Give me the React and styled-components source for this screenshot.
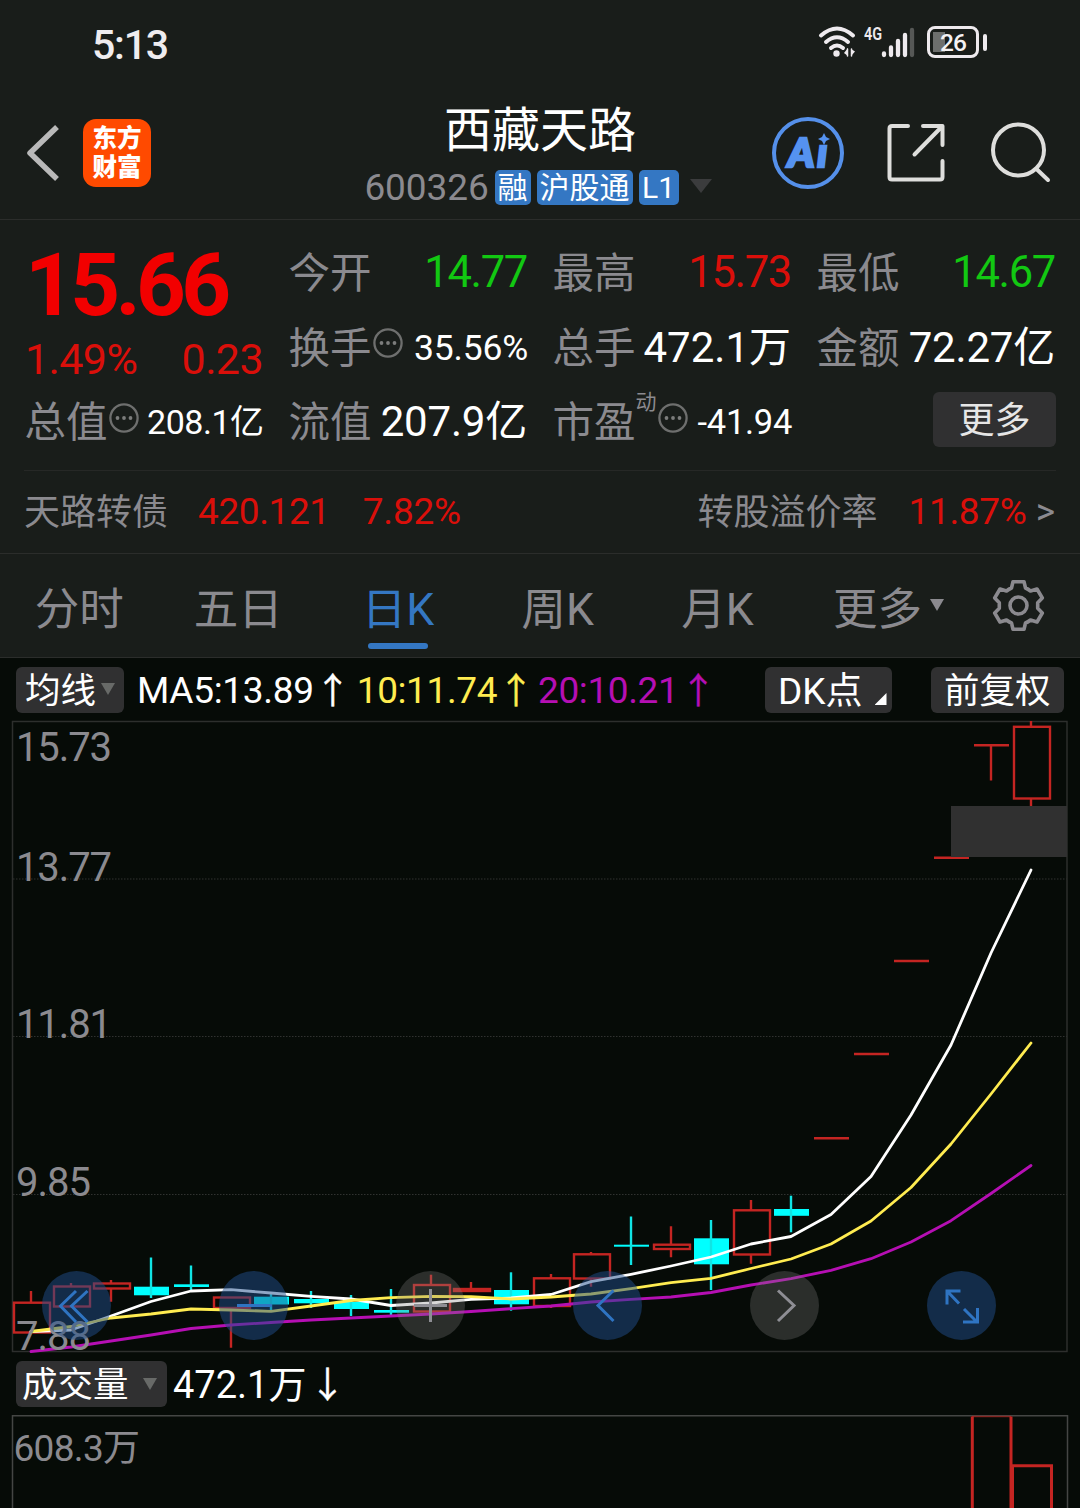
import React from 'react';
import styled, { createGlobalStyle } from 'styled-components';

const c = {
  panel: '#191d1a',
  chart: '#060b07',
  line: '#2b2d2b',
  grey: '#8b8a8f',
  red: '#da0f0a',
  bright: '#f20000',
  green: '#12c812',
  white: '#ffffff',
  blue: '#3477c3',
  yellow: '#ffec50',
  purple: '#b50fb3',
  chip: '#303031',
  candle: '#c42522',
  cyan: '#00ffff',
};

const Global = createGlobalStyle`
  * { box-sizing: border-box; }
  body { margin: 0; background: ${c.chart}; }
  svg { display: block; flex: none; overflow: visible; }
`;

const Screen = styled.main`
  width: 1080px;
  height: 1508px;
  overflow: hidden;
  display: flex;
  flex-direction: column;
  background: ${c.chart};
  font-family: Roboto, 'Noto Sans CJK SC', sans-serif;
  white-space: nowrap;
`;

const Text = styled.span`
  font-size: ${(p) => p.$size}px;
  font-weight: ${(p) => p.$weight || 400};
  letter-spacing: ${(p) => p.$ls || 0}px;
  color: ${(p) => p.$color || c.grey};
  margin-left: ${(p) => p.$ml || 0}px;
  margin-right: ${(p) => p.$mr || 0}px;
`;

/* ---------- status bar ---------- */

const StatusBar = styled.div`
  height: 88px;
  background: ${c.panel};
  display: flex;
  justify-content: space-between;
  align-items: center;
  padding: 2px 93px 0 92px;
  line-height: 60px;
`;

const StatusIcons = styled.div`
  display: flex;
  align-items: center;
  height: 34px;
  margin-top: -6px;
`;

const Network = styled.span`
  width: 20px;
  margin: 0 -1px 16px 7px;
  font-size: 19px;
  font-weight: 600;
  line-height: 18px;
  color: #eeeaee;
  transform: scaleX(0.76);
  transform-origin: left;
`;

const Battery = styled.div`
  width: 52px;
  height: 32px;
  margin-left: 12px;
  border: 3px solid #eeeaee;
  border-radius: 8px;
  padding: 2px;
  display: grid;
  background: linear-gradient(#6d6f6d, #6d6f6d) 3px 3px / 12px 20px no-repeat;
  color: #f4f2f4;
  font-size: 24.5px;
  font-weight: 500;
  line-height: 24px;
  letter-spacing: -1px;
  text-align: center;
`;

const BatteryTip = styled.div`
  width: 4px;
  height: 17px;
  margin-left: 4px;
  border-radius: 2px;
  background: #eeeaee;
`;

/* ---------- header ---------- */

const Header = styled.header`
  height: 132px;
  background: ${c.panel};
  border-bottom: 1px solid ${c.line};
  display: grid;
  grid-template-columns: 360px 356px 1fr;
`;

const HeaderSide = styled.div`
  display: flex;
  align-items: center;
  padding-left: ${(p) => p.$left}px;
  padding-bottom: 2px;
`;

const Logo = styled.div`
  width: 68px;
  height: 68px;
  margin-left: 22px;
  border-radius: 13px;
  background: #ff4a00;
  color: #fff;
  display: grid;
  place-content: center;
  font: 900 24.5px/29px Roboto, 'Noto Sans CJK SC', sans-serif;
`;

const TitleBlock = styled.div`
  display: flex;
  flex-direction: column;
  align-items: center;
`;

const TitleLine = styled.div`
  height: 82px;
  line-height: 86px;
  padding-left: 4px;
`;

const CodeLine = styled.div`
  height: 36px;
  display: flex;
  align-items: center;
  line-height: 36px;
`;

const Badge = styled.span`
  width: ${(p) => p.$w}px;
  height: 35px;
  margin: -2px 6px 0 0;
  border-radius: 5px;
  background: ${c.blue};
  color: #fff;
  font-size: 30px;
  line-height: 36px;
  text-align: center;
`;

const Triangle = styled.i`
  width: 0;
  height: 0;
  flex: none;
  margin-top: ${(p) => p.$mt || 0}px;
  margin-left: ${(p) => p.$ml || 0}px;
  margin-right: ${(p) => p.$mr || 0}px;
  border-left: ${(p) => p.$w / 2}px solid transparent;
  border-right: ${(p) => p.$w / 2}px solid transparent;
  border-top: ${(p) => p.$h}px solid ${(p) => p.$color};
`;

const AiBadge = styled.div`
  width: 72px;
  height: 72px;
  border: 4.5px solid #5590ea;
  border-radius: 50%;
  position: relative;
  color: #5592f0;
  font: italic 900 40px/62px Lato, sans-serif;
  -webkit-text-stroke: 2.6px #5592f0;
  letter-spacing: 3px;
  padding-left: 12px;
`;

const Spark = styled.svg`
  position: absolute;
  left: 42px;
  top: 12px;
`;

/* ---------- quote ---------- */

const Quote = styled.section`
  height: 250px;
  background: ${c.panel};
  padding: 15px 24px 0 25px;
  display: grid;
  grid-template-columns: repeat(4, 238px);
  grid-template-rows: repeat(3, 74.5px);
  column-gap: 26px;
`;

const PriceCell = styled.div`
  grid-row: span 2;
`;

const Price = styled.div`
  height: 100px;
  line-height: 101px;
  margin-left: 0;
`;

const Pair = styled.div`
  height: ${(p) => p.$h || 74.5}px;
  line-height: ${(p) => p.$h || 74.5}px;
  padding-top: ${(p) => (p.$h ? 0 : 2)}px;
  display: flex;
  justify-content: space-between;
  align-items: center;
`;

const Label = styled.span`
  display: flex;
  align-items: center;
  padding-top: 2px;
  margin-left: -0.5px;
  color: ${c.grey};
  font-size: 41.5px;
`;

const Sup = styled.sup`
  font-size: 21px;
  line-height: 22px;
  margin: -42px 0 0 0;
`;

const MoreButton = styled.button`
  justify-self: end;
  align-self: center;
  width: 123px;
  height: 55px;
  margin: -4px -1px 0 0;
  padding: 4px 0 0;
  border: 0;
  border-radius: 6px;
  background: ${c.chip};
  color: #e6e6e6;
  font: 36px/51px Roboto, 'Noto Sans CJK SC', sans-serif;
`;

const Bond = styled.section`
  height: 84px;
  background: ${c.panel};
  border-bottom: 1px solid ${c.line};
  padding: 0 24px;
`;

const BondRow = styled.div`
  height: 83px;
  border-top: 1px solid #262826;
  padding-right: 1px;
  display: flex;
  align-items: center;
  line-height: 82px;
`;

const BondName = styled(Text)`
  padding-top: 2px;
`;

const Spacer = styled.span`
  flex: 1;
`;

/* ---------- tabs ---------- */

const Tabs = styled.nav`
  height: 104px;
  background: ${c.panel};
  border-bottom: 1px solid ${c.line};
  display: grid;
  grid-template-columns: 158.5px repeat(5, 159.7px) 1fr;
`;

const Tab = styled.div`
  display: flex;
  flex-direction: column;
  align-items: center;
  color: ${(p) => (p.$active ? c.blue : c.grey)};
  font-size: 44.5px;
  line-height: 112px;
  &::after {
    content: '';
    width: 60px;
    height: 6px;
    margin-top: -23px;
    border-radius: 3px;
    background: ${(p) => (p.$active ? c.blue : 'transparent')};
  }
`;

const TabLabel = styled.span`
  display: flex;
  align-items: center;
`;

const Settings = styled.div`
  display: flex;
  align-items: center;
  padding-left: 35px;
`;

/* ---------- charts ---------- */

const Toolbar = styled.div`
  height: 63px;
  padding: 0 16px;
  display: flex;
  align-items: center;
  line-height: 46px;
`;

const Reading = styled(Text)`
  padding-top: 2px;
`;

const Chip = styled.div`
  width: ${(p) => p.$w}px;
  height: 46px;
  padding: 3px 0 0 ${(p) => p.$pl}px;
  margin-left: ${(p) => p.$ml || 0}px;
  border-radius: 6px;
  background: ${c.chip};
  color: #fff;
  display: flex;
  align-items: center;
  font-size: ${(p) => p.$size || 35.5}px;
  line-height: 43px;
`;

const Arrow = styled.span`
  width: ${(p) => p.$w}px;
  margin-top: -4px;
  font: 400 36px/46px 'Noto Sans CJK SC', sans-serif;
  -webkit-text-stroke: 0.4px ${(p) => p.$color};
  color: ${(p) => p.$color};
  display: flex;
  justify-content: center;
`;

const Corner = styled.i`
  width: 12px;
  height: 12px;
  margin: 16px 0 0 12px;
  background: #fff;
  clip-path: polygon(100% 0, 100% 100%, 0 100%);
`;

const ChartArea = styled.div`
  position: relative;
  height: ${(p) => p.$h}px;
  flex: none;
`;

const Round = styled.button`
  position: absolute;
  left: ${(p) => p.$x - 34.5}px;
  top: 550px;
  width: 69px;
  height: 69px;
  padding: 0;
  border: 0;
  border-radius: 50%;
  background: ${(p) => (p.$blue ? 'rgba(32,78,140,0.5)' : 'rgba(128,128,128,0.3)')};
`;

const candles = [
  ['r', 1302.7, 1332.5, 1291, 1332],
  ['r', 1286.5, 1306.5, 1283, 1306],
  ['r', 1283.5, 1288.5, 1280, 1301.7],
  ['c', 1286.7, 1295.3, 1257.5, 1298],
  ['c', 1284.3, 1287, 1265.5, 1290],
  ['r', 1297.5, 1308, 1297, 1347.7],
  ['c', 1296.7, 1304.5, 1294, 1310.5],
  ['c', 1299, 1303.3, 1291, 1308],
  ['c', 1302, 1309, 1295, 1316],
  ['c', 1310, 1312.7, 1289, 1315],
  ['r', 1285, 1311.5, 1274.7, 1311],
  ['r', 1289, 1291, 1282, 1290],
  ['c', 1290, 1304.3, 1272.3, 1310.7],
  ['r', 1278.3, 1306, 1274, 1308],
  ['r', 1254.3, 1278.5, 1252, 1286.7],
  ['c', 1244.7, 1246.7, 1216.5, 1265],
  ['r', 1244.7, 1249, 1226.3, 1257.3],
  ['c', 1238.3, 1264.3, 1220, 1290],
  ['r', 1210.3, 1254.5, 1200, 1263.7],
  ['c', 1209, 1215.8, 1195.7, 1232.3],
  ['d', 1138.3],
  ['d', 1054],
  ['d', 961],
  ['d', 857.7],
  ['d', 745.3, 0, 745, 780.5],
  ['r', 726.8, 798.5, 721, 806.5],
];

const ma5 = [1331.5, 1330, 1316, 1301.5, 1291, 1289.7, 1293, 1296.3, 1299, 1305.5, 1303, 1299.3, 1298, 1294.5, 1281.7, 1274.3, 1266, 1257, 1244, 1236.5, 1214.5, 1176.5, 1115, 1045, 953, 870];
const ma10 = [1331.5, 1326.5, 1318, 1314, 1309, 1310, 1311.3, 1306, 1300.5, 1297.7, 1296.3, 1296.7, 1299, 1297, 1294, 1288.7, 1282.7, 1278.3, 1268.5, 1259, 1244, 1221, 1187.5, 1144, 1094, 1043];
const ma20 = [1351.5, 1347, 1341, 1335, 1328.5, 1325, 1322.5, 1320, 1318, 1316, 1314, 1311.5, 1308.7, 1306, 1302, 1299.3, 1297, 1292.5, 1285, 1278.7, 1270.3, 1258.7, 1242, 1220.7, 1193.5, 1165.5];

const points = (values) => values.map((y, i) => `${31 + i * 40},${y}`).join(' ');

function Candle({ data, x }) {
  const [kind, open, close, high, low] = data;
  if (kind === 'd') {
    return (
      <g stroke={c.candle} strokeWidth="2.4">
        <path d={`M${x - 17} ${open}h35`} />
        {low ? <path d={`M${x} ${high}V${low}`} /> : null}
      </g>
    );
  }
  if (kind === 'c') {
    return (
      <g>
        <rect x={x - 17} y={open} width="35" height={close - open} fill={c.cyan} />
        <path d={`M${x} ${high}V${low}`} stroke="#10e4e4" strokeWidth="2.4" />
      </g>
    );
  }
  return (
    <g stroke={c.candle} strokeWidth="2.4" fill="none">
      <rect x={x - 17} y={open} width="36" height={close - open} />
      <path d={`M${x} ${high}V${open}M${x} ${close}V${Math.max(low, close)}`} />
    </g>
  );
}

const axis = [
  ['15.73', 746.5, 94],
  ['13.77', 866.5, 94],
  ['11.81', 1023.5, 94],
  ['9.85', 1181.5, 73],
  ['7.88', 1335.5, 73],
];

function KChart() {
  return (
    <svg width="1080" height="632" viewBox="0 721 1080 632">
      <g stroke="#303230" strokeDasharray="1.5 1.5">
        <path d="M13 879h1054M13 1036.5h1054M13 1194.500h1054" />
      </g>
      <rect x="12.500" y="721.500" width="1054.500" height="630" fill="none" stroke="#2d2f2d" strokeWidth="1.500" />
      {candles.map((d, i) => (
        <Candle key={i} data={d} x={31 + i * 40} />
      ))}
      <rect x="951" y="806" width="116" height="51" fill="#303030" />
      <g fill="none" strokeWidth="2.8" strokeLinejoin="round" strokeLinecap="round">
        <polyline points={points(ma5)} stroke="#fff" />
        <polyline points={points(ma10)} stroke={c.yellow} />
        <polyline points={points(ma20)} stroke={c.purple} />
      </g>
      {axis.map(([label, y, w]) => (
        <text key={label} x="16" y={y + 14.5} fontSize="40" fill={c.grey} textLength={w + 2}>
          {label}
        </text>
      ))}
    </svg>
  );
}

function VolumeChart() {
  return (
    <svg width="1080" height="93" viewBox="0 1415 1080 93">
      <path d="M12.500 1508V1415.700H1067.500V1508" fill="none" stroke="#444644" strokeWidth="1.500" />
      <g fill="none" stroke={c.candle} strokeWidth="3">
        <path d="M972.300 1510V1416.500M1011 1416.500V1510" />
        <path d="M972 1416.500H1011" strokeWidth="1.500" strokeOpacity="0.6" />
        <path d="M1012.500 1510V1465.700H1051.500V1510" />
      </g>
      <text x="13.500" y="1460.500" fontSize="37" fill={c.grey} textLength="126.500">
        608.3万
      </text>
    </svg>
  );
}

const Info = () => (
  <svg width="32" height="32" viewBox="0 0 32 32">
    <circle cx="16" cy="16" r="13.600" fill="none" stroke="#6e6f6e" strokeWidth="2.300" />
    <g fill="#7c7d7c">
      <circle cx="9.500" cy="16" r="1.900" />
      <circle cx="16" cy="16" r="1.900" />
      <circle cx="22.500" cy="16" r="1.900" />
    </g>
  </svg>
);

const InfoBox = styled.span`
  margin: -11px 0 0 0.5px;
`;

function Gear() {
  return (
    <svg width="54" height="54" viewBox="-26.500 -26.500 54 54" fill="none" stroke={c.grey} strokeWidth="3.600">
      <path
        strokeLinejoin="round"
        d="M-5.500 -23.800H5.500L7 -17.500Q9.500 -16.500 12 -14.500L18.500 -16.500L23.800 -7.500L19.200 -2.800V2.800L23.800 7.500L18.500 16.500L12 14.500Q9.500 16.500 7 17.500L5.500 23.800H-5.500L-7 17.500Q-9.500 16.500 -12 14.500L-18.500 16.500L-23.800 7.500L-19.200 2.800V-2.800L-23.800 -7.500L-18.500 -16.500L-12 -14.500Q-9.500 -16.500 -7 -17.500Z"
      />
      <circle r="8.500" />
    </svg>
  );
}

const ActionIcon = styled.svg.attrs({ fill: 'none', stroke: '#dededc', strokeWidth: 4, strokeLinecap: 'round', strokeLinejoin: 'round' })`
  margin-left: ${(p) => p.$ml}px;
`;

const controls = [
  { x: 76.5, blue: true, d: 'M34 20L18.500 35L34 51M45.500 20L29.500 35L45.500 51' },
  { x: 253.5, blue: true, d: 'M18 34.500H53' },
  { x: 430.5, blue: false, d: 'M18 34.500H51M34.500 18V51' },
  { x: 607.5, blue: true, d: 'M40.500 19.500L25 34.500L40.500 50' },
  { x: 784.5, blue: false, d: 'M28 19.500L44 34.500L28 50' },
  { x: 961.5, blue: true, d: 'M33.500 20H20V33.500M20 20L32 32.500M37 38L50.500 51.500M50.500 37V51H36' },
];

export default function App() {
  return (
    <Screen>
      <Global />
      <StatusBar>
        <Text $size={41} $weight={500} $ls={-1.2} $color="#efecef">5:13</Text>
        <StatusIcons>
          <svg width="39" height="34" viewBox="0 0 39 34" fill="none" stroke="#eeeaee" strokeWidth="4" strokeLinecap="round">
            <path d="M3 10.500Q19 -3.500 35 10.500M8 17Q19 7.500 30 17M13 23Q19 18 25 23" />
            <circle cx="18.500" cy="28.500" r="3.200" fill="#eeeaee" stroke="none" />
            <path d="M30 23V31L26 28ZM33 23V31M33 24L37 26.500L34 30" fill="#eeeaee" stroke="none" />
            <path d="M29.500 24V31M33.500 24V31" strokeWidth="1.500" />
          </svg>
          <Network>4G</Network>
          <svg width="32" height="34" viewBox="1 0 32 34" strokeWidth="4.300" strokeLinecap="round" stroke="#eeeaee">
            <path d="M2 28.500V30M9 22.500V30M16 16V30M23 10V30" />
            <path d="M30 5V30" stroke="#565856" />
          </svg>
          <Battery>26</Battery>
          <BatteryTip />
        </StatusIcons>
      </StatusBar>

      <Header>
        <HeaderSide $left={25}>
          <svg width="36" height="60" viewBox="0 0 36 60" fill="none" stroke="#b9b9b9" strokeWidth="5.500">
            <path d="M32 4L5 30L32 56" strokeLinejoin="round" />
          </svg>
          <Logo>
            <span>东方</span>
            <span>财富</span>
          </Logo>
        </HeaderSide>
        <TitleBlock>
          <TitleLine>
            <Text $size={48} $color="#fff">西藏天路</Text>
          </TitleLine>
          <CodeLine>
            <Text $size={37} $ls={-0.1} $mr={6} $ml={0}>600326</Text>
            <Badge $w={36}>融</Badge>
            <Badge $w={96}>沪股通</Badge>
            <Badge $w={40}>L1</Badge>
            <Triangle $w={22} $h={14} $color="#3b3c3d" $ml={5} $mt={-4} />
          </CodeLine>
        </TitleBlock>
        <HeaderSide $left={56}>
          <AiBadge>
            Aı
            <Spark width="12" height="12" viewBox="0 0 12 12" fill="#5592f0">
              <path d="M6 0L8 4L12 6L8 8L6 12L4 8L0 6L4 4Z" />
            </Spark>
          </AiBadge>
          <ActionIcon $ml={42} width="60" height="60" viewBox="0 0 60 60">
            <path d="M22 3H6Q3.500 3 3.500 5.500V54Q3.500 56.500 6 56.500H54Q56.500 56.500 56.500 54V38M37 3H56.500V22M56 3.500L28.500 31.500" />
          </ActionIcon>
          <ActionIcon $ml={44} width="62" height="62" viewBox="0 0 62 62">
            <circle cx="28.500" cy="28" r="25.500" />
            <path d="M46.500 47L58 58" />
          </ActionIcon>
        </HeaderSide>
      </Header>

      <Quote>
        <PriceCell>
          <Price>
            <Text $size={87} $weight={700} $ls={-4.7} $color={c.bright}>15.66</Text>
          </Price>
          <Pair $h={49}>
            <Text $size={43} $ls={-0.6} $color={c.red}>1.49%</Text>
            <Text $size={43} $ls={-0.6} $color={c.red}>0.23</Text>
          </Pair>
        </PriceCell>
        <Pair>
          <Label>今开</Label>
          <Text $size={43.5} $ls={-1.3} $color={c.green}>14.77</Text>
        </Pair>
        <Pair>
          <Label>最高</Label>
          <Text $size={43.5} $ls={-1.3} $color={c.red}>15.73</Text>
        </Pair>
        <Pair>
          <Label>最低</Label>
          <Text $size={43.5} $ls={-1.3} $color={c.green}>14.67</Text>
        </Pair>
        <Pair>
          <Label>
            换手
            <InfoBox><Info /></InfoBox>
          </Label>
          <Text $size={35.5} $ls={-0.2} $mr={-1} $color={c.white}>35.56%</Text>
        </Pair>
        <Pair>
          <Label>总手</Label>
          <Text $size={42} $color={c.white}>472.1万</Text>
        </Pair>
        <Pair>
          <Label>金额</Label>
          <Text $size={42} $ls={-0.2} $color={c.white}>72.27亿</Text>
        </Pair>
        <Pair>
          <Label>
            总值
            <InfoBox><Info /></InfoBox>
          </Label>
          <Text $size={34} $ls={-0.5} $mr={-0.5} $color={c.white}>208.1亿</Text>
        </Pair>
        <Pair>
          <Label>流值</Label>
          <Text $size={42} $ls={-0.2} $color={c.white}>207.9亿</Text>
        </Pair>
        <Pair>
          <Label>
            市盈
            <Sup>动</Sup>
            <InfoBox><Info /></InfoBox>
          </Label>
          <Text $size={34.5} $ls={-0.3} $mr={-1} $color={c.white}>-41.94</Text>
        </Pair>
        <MoreButton>更多</MoreButton>
      </Quote>

      <Bond>
        <BondRow>
          <BondName $size={36}>天路转债</BondName>
          <Text $size={37} $ml={30} $ls={-0.4} $color={c.red}>420.121</Text>
          <Text $size={37} $ml={33} $ls={-0.2} $color={c.red}>7.82%</Text>
          <Spacer />
          <BondName $size={36}>转股溢价率</BondName>
          <Text $size={37} $ml={31} $ls={-0.3} $color={c.red}>11.87%</Text>
          <Text $size={37} $ml={9}>&gt;</Text>
        </BondRow>
      </Bond>

      <Tabs>
        <Tab>分时</Tab>
        <Tab>五日</Tab>
        <Tab $active>日K</Tab>
        <Tab>周K</Tab>
        <Tab>月K</Tab>
        <Tab>
          <TabLabel>
            更多
            <Triangle $w={15} $h={12} $color={c.grey} $ml={8} $mr={-23} $mt={-10} />
          </TabLabel>
        </Tab>
        <Settings>
          <Gear />
        </Settings>
      </Tabs>

      <Toolbar>
        <Chip $w={108} $pl={9}>
          均线
          <Triangle $w={15} $h={12} $color="#686a68" $ml={5} $mt={-4} />
        </Chip>
        <Reading $size={37} $ls={-0.3} $ml={13} $color="#fff">MA5:13.89</Reading>
        <Arrow $w={38} $color="#fff">↑</Arrow>
        <Reading $size={37} $ls={-0.4} $ml={5} $color={c.yellow}>10:11.74</Reading>
        <Arrow $w={38} $color={c.yellow}>↑</Arrow>
        <Reading $size={37} $ls={-0.4} $ml={3} $color={c.purple}>20:10.21</Reading>
        <Arrow $w={40} $color={c.purple}>↑</Arrow>
        <Spacer />
        <Chip $w={127} $pl={13} $size={37}>
          DK点
          <Corner />
        </Chip>
        <Chip $w={133} $pl={13} $ml={39}>前复权</Chip>
      </Toolbar>

      <ChartArea $h={631}>
        <KChart />
        {controls.map((b) => (
          <Round key={b.x} $x={b.x} $blue={b.blue}>
            <svg width="69" height="69" viewBox="0 0 69 69" fill="none" stroke={b.blue ? '#2f74c2' : '#8e8e94'} strokeWidth="3">
              <path d={b.d} />
            </svg>
          </Round>
        ))}
      </ChartArea>

      <Toolbar>
        <Chip $w={151} $pl={6}>
          成交量
          <Triangle $w={15} $h={12} $color="#686a68" $ml={14} $mt={-3} />
        </Chip>
        <Reading $size={38} $ml={6} $color="#fff">472.1万</Reading>
        <Arrow $w={42} $color="#fff">↓</Arrow>
      </Toolbar>

      <ChartArea $h={93}>
        <VolumeChart />
      </ChartArea>
    </Screen>
  );
}
